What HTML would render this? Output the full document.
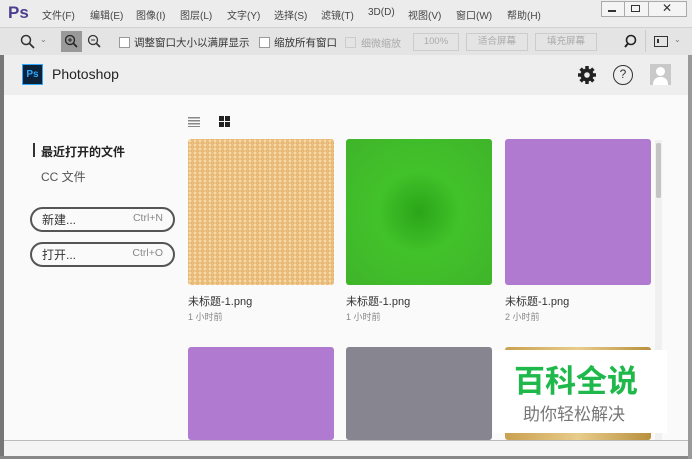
<!DOCTYPE html>
<html><head><meta charset="utf-8"><style>
*{margin:0;padding:0;box-sizing:border-box}
body{width:692px;height:459px;overflow:hidden;background:#d9d9d9;font-family:"Liberation Sans","Noto Sans CJK SC",sans-serif;position:relative}
.a{position:absolute}
.menu{left:0;top:0;width:692px;height:27px;background:#ececec;font-size:10px;color:#444}
.menu span{position:absolute;top:7px}
.tool{left:0;top:27px;width:692px;height:28px;background:#e4e4e4;border-top:1px solid #d0d0d0;font-size:10.5px;color:#333}
.cb{width:11px;height:11px;border:1px solid #999;background:#fff}
.btn{border:1px solid #ccc;color:#aaa;font-size:9.5px;text-align:center;line-height:16px;height:18px;top:5px}
.hdr{left:4px;top:55px;width:684px;height:40px;background:#eeeeee}
.main{left:4px;top:95px;width:684px;height:345px;background:#fafafa}
.th{width:146px;height:146px;border-radius:3px}
.cap{font-size:11px;color:#333}
.sub{font-size:9px;color:#888}
.pill{left:30px;width:145px;height:25px;border:2px solid #555;border-radius:13px;font-size:12px;color:#333}
</style></head><body>
<div class="a menu">
<span style="left:8px;top:3px;font-size:17px;font-weight:bold;color:#4a3f8f">Ps</span>
<span style="left:42px">文件(F)</span><span style="left:90px">编辑(E)</span><span style="left:136px">图像(I)</span><span style="left:180px">图层(L)</span><span style="left:227px">文字(Y)</span><span style="left:274px">选择(S)</span><span style="left:321px">滤镜(T)</span><span style="left:368px">3D(D)</span><span style="left:408px">视图(V)</span><span style="left:456px">窗口(W)</span><span style="left:507px">帮助(H)</span>
<div class="a" style="left:601px;top:1px;width:86px;height:16px;border:1px solid #aaa;background:#f4f4f4"></div>
<div class="a" style="left:624px;top:1px;width:1px;height:16px;background:#aaa"></div>
<div class="a" style="left:648px;top:1px;width:1px;height:16px;background:#aaa"></div>
<div class="a" style="left:608px;top:10px;width:8px;height:2px;background:#333"></div>
<div class="a" style="left:631px;top:5px;width:9px;height:7px;border:1.5px solid #333"></div>
<span style="left:662px;top:1px;font-size:12px;color:#333">✕</span>
</div>
<div class="a tool">
<svg class="a" style="left:20px;top:6px" width="16" height="16"><circle cx="6" cy="6" r="4.5" fill="none" stroke="#333" stroke-width="1.5"/><line x1="9.5" y1="9.5" x2="14" y2="14" stroke="#333" stroke-width="1.8"/></svg>
<span class="a" style="left:40px;top:7px;font-size:8px;color:#777">⌄</span>
<div class="a" style="left:61px;top:3px;width:21px;height:21px;background:#999"></div>
<svg class="a" style="left:64px;top:6px" width="16" height="16"><circle cx="6" cy="6" r="4.5" fill="none" stroke="#222" stroke-width="1.3"/><path d="M4 6h4M6 4v4" stroke="#222"/><line x1="9.5" y1="9.5" x2="13" y2="13" stroke="#222" stroke-width="1.6"/></svg>
<svg class="a" style="left:87px;top:6px" width="16" height="16"><circle cx="6" cy="6" r="4.5" fill="none" stroke="#333" stroke-width="1.3"/><path d="M4 6h4" stroke="#333"/><line x1="9.5" y1="9.5" x2="13" y2="13" stroke="#333" stroke-width="1.6"/></svg>
<div class="a cb" style="left:119px;top:9px"></div><span class="a" style="left:134px;top:7px">调整窗口大小以满屏显示</span>
<div class="a cb" style="left:259px;top:9px"></div><span class="a" style="left:274px;top:7px">缩放所有窗口</span>
<div class="a cb" style="left:345px;top:9px;border-color:#ccc;background:#e4e4e4"></div><span class="a" style="left:361px;top:7px;color:#aaa;font-size:10px">细微缩放</span>
<div class="a btn" style="left:413px;width:46px">100%</div>
<div class="a btn" style="left:466px;width:62px">适合屏幕</div>
<div class="a btn" style="left:535px;width:62px">填充屏幕</div>
<svg class="a" style="left:623px;top:6px" width="16" height="16"><circle cx="8" cy="6" r="4.5" fill="none" stroke="#222" stroke-width="1.6"/><line x1="5" y1="9.5" x2="2" y2="13" stroke="#222" stroke-width="2"/></svg>
<div class="a" style="left:645px;top:2px;width:1px;height:22px;background:#ccc"></div>
<div class="a" style="left:654px;top:8px;width:14px;height:11px;border:1.5px solid #333"></div>
<div class="a" style="left:657px;top:11px;width:2px;height:4px;background:#333"></div>
<span class="a" style="left:674px;top:7px;font-size:8px;color:#777">⌄</span>
</div>
<div class="a" style="left:0;top:55px;width:4px;height:404px;background:#777"></div>
<div class="a hdr">
<div class="a" style="left:18px;top:9px;width:21px;height:21px;background:#0b2238;border:1px solid #31a8ff;color:#31a8ff;font-size:10px;font-weight:bold;line-height:19px;text-align:center">Ps</div>
<span class="a" style="left:48px;top:11px;font-size:14px;color:#222">Photoshop</span>
<svg class="a" style="left:573px;top:10px" width="20" height="20" viewBox="0 0 20 20"><g fill="#222"><circle cx="10" cy="10" r="6.5"/><g stroke="#222" stroke-width="3.5"><line x1="10" y1="1" x2="10" y2="19"/><line x1="1" y1="10" x2="19" y2="10"/><line x1="3.6" y1="3.6" x2="16.4" y2="16.4"/><line x1="16.4" y1="3.6" x2="3.6" y2="16.4"/></g></g><circle cx="10" cy="10" r="2.8" fill="#eee"/></svg>
<div class="a" style="left:609px;top:10px;width:20px;height:20px;border:1.5px solid #333;border-radius:50%;font-size:12px;text-align:center;line-height:17px;color:#333">?</div>
<div class="a" style="left:646px;top:9px;width:21px;height:21px;background:#c9c9c9;overflow:hidden"><div class="a" style="left:6px;top:3px;width:9px;height:9px;border-radius:50%;background:#fff"></div><div class="a" style="left:3px;top:13px;width:15px;height:10px;border-radius:7px 7px 0 0;background:#fff"></div></div>
</div>
<div class="a main"></div>
<div class="a" style="left:33px;top:143px;width:2px;height:14px;background:#333"></div>
<span class="a" style="left:41px;top:143px;font-size:12px;color:#222;font-weight:bold">最近打开的文件</span>
<span class="a" style="left:41px;top:168px;font-size:12px;color:#555">CC 文件</span>
<div class="a pill" style="top:207px"><span class="a" style="left:10px;top:2px">新建...</span><span class="a" style="right:10px;top:3px;font-size:10.5px;color:#888">Ctrl+N</span></div>
<div class="a pill" style="top:242px"><span class="a" style="left:10px;top:2px">打开...</span><span class="a" style="right:10px;top:3px;font-size:10.5px;color:#888">Ctrl+O</span></div>
<div class="a" style="left:188px;top:117px;width:12px;height:10px;background:repeating-linear-gradient(#888 0 1.5px,transparent 1.5px 3px)"></div>
<div class="a" style="left:219px;top:116px;width:5px;height:5px;background:#222;box-shadow:6px 0 #222,0 6px #222,6px 6px #222"></div>
<div class="a th" style="left:188px;top:139px;background:#efc07c;background-image:radial-gradient(circle at 2px 2px,#f8d8a2 1.2px,#dca965 2.2px,transparent 2.6px);background-size:5px 4px"></div>
<div class="a th" style="left:346px;top:139px;background:radial-gradient(circle,#2aa518 0,#42c22a 40%,#3fb42a 100%)"></div>
<div class="a th" style="left:505px;top:139px;background:#b07ad0"></div>
<span class="a cap" style="left:188px;top:293px">未标题-1.png</span><span class="a sub" style="left:188px;top:310px">1 小时前</span>
<span class="a cap" style="left:346px;top:293px">未标题-1.png</span><span class="a sub" style="left:346px;top:310px">1 小时前</span>
<span class="a cap" style="left:505px;top:293px">未标题-1.png</span><span class="a sub" style="left:505px;top:310px">2 小时前</span>
<div class="a th" style="left:188px;top:347px;height:93px;background:#b07ad0"></div>
<div class="a th" style="left:346px;top:347px;height:93px;background:#878690"></div>
<div class="a th" style="left:505px;top:347px;height:93px;background:linear-gradient(90deg,#c9a050,#e8cc8a,#b8903e)"></div>
<div class="a" style="left:655px;top:140px;width:7px;height:300px;background:#f0f0f0"></div>
<div class="a" style="left:656px;top:143px;width:5px;height:55px;background:#c4c4c4;border-radius:2px"></div>
<div class="a" style="left:493px;top:350px;width:174px;height:83px;background:#fff"></div>
<span class="a" style="left:514px;top:361px;font-size:31px;font-weight:bold;color:#1fb84a;font-family:'Noto Sans CJK SC',sans-serif;line-height:36px">百科全说</span>
<span class="a" style="left:523px;top:402px;font-size:17px;color:#777;font-family:'Noto Sans CJK SC',sans-serif;line-height:22px">助你轻松解决</span>
<div class="a" style="left:4px;top:440px;width:684px;height:1px;background:#bbb"></div>
<div class="a" style="left:4px;top:441px;width:684px;height:15px;background:#f4f4f4"></div>
<div class="a" style="left:0;top:456px;width:692px;height:3px;background:#888"></div>
<div class="a" style="left:688px;top:55px;width:4px;height:404px;background:#999"></div>
</body></html>
